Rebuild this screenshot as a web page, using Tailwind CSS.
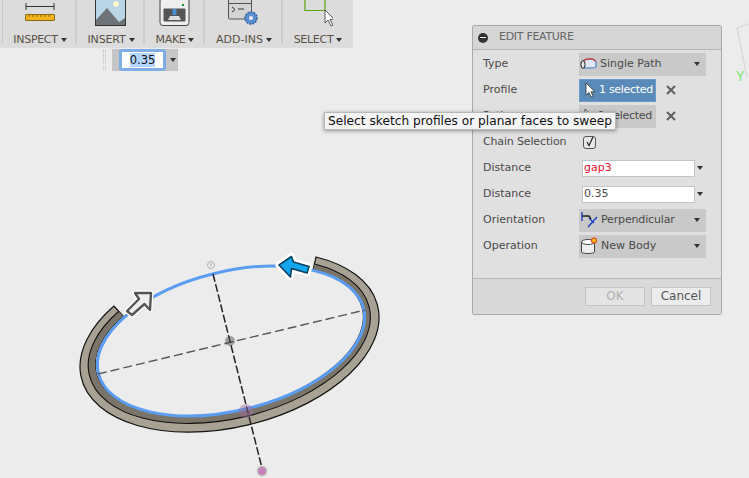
<!DOCTYPE html>
<html><head><meta charset="utf-8">
<script src="https://cdn.jsdelivr.net/npm/@tailwindcss/browser@4"></script>
</head>
<body class="bg-[#ececec]">
<div class="relative w-[749px] h-[478px] overflow-hidden bg-[#ececec] font-['DejaVu_Sans',sans-serif] text-[#4a4a4a]">

  <!-- viewport drawing -->
  <svg class="absolute left-0 top-0" width="749" height="478" viewBox="0 0 749 478" fill="none">
    <path d="M749 24L737 28L747 77" stroke="#cfd3cf" stroke-width="1"/>
    <path d="M114 306A152.500 85 -13.700 1 0 316 257L313 270A137 70 -13.700 1 1 123 316Z" fill="#a8a294" stroke="#111" stroke-width="1.200"/>
    <path d="M118.500 311.500A144 77 -13.700 1 0 314.500 264L313 270A137 70 -13.700 1 1 123 316Z" fill="#7a7568"/>
    <path d="M118.500 311.500A144 77 -13.700 1 0 314.500 264" stroke="#111" stroke-width="1.100"/>
    <ellipse cx="231" cy="341" rx="136.500" ry="69.500" transform="rotate(-13.700 231 341)" stroke="#5a9df2" stroke-width="3"/>
    <path d="M98 374L365 310" stroke="#555" stroke-width="1.400" stroke-dasharray="9 4"/>
    <path d="M213 274L262 468" stroke="#222" stroke-width="1.500" stroke-dasharray="8 2.500"/>
    <circle cx="211" cy="265" r="3.500" fill="#eee" stroke="#b0b0b0"/>
    <path d="M211 263V266" stroke="#999"/>
    <circle cx="230" cy="341" r="5" fill="#444" fill-opacity=".45"/>
    <circle cx="246" cy="411" r="7" fill="#a06aa0" fill-opacity=".45"/>
    <circle cx="262" cy="471" r="4.500" fill="#c77fbc" stroke="#bbb" stroke-width="1.500"/>
    <path d="M135 293L151 293L150 310L144.500 304L132 315L127 311L139 299Z" fill="#eee" stroke="#fff" stroke-width="5" stroke-linejoin="round"/>
    <path d="M135 293L151 293L150 310L144.500 304L132 315L127 311L139 299Z" fill="#eee" stroke="#555" stroke-width="2.400" stroke-linejoin="round"/>
    <path d="M279 265L291.500 256.500L293.500 262L309 266.500L307 273L291.500 268.500L290.500 277Z" fill="#fff" stroke="#fff" stroke-width="7" stroke-linejoin="round"/>
    <path d="M279 265L291.500 256.500L293.500 262L309 266.500L307 273L291.500 268.500L290.500 277Z" fill="#12a7ee" stroke="#0b3f60" stroke-width="1.600" stroke-linejoin="round"/>
  </svg>
  <div class="absolute left-[736px] top-[69px] text-[14px] leading-[14px] text-[#7fe87f]">Y</div>

  <!-- toolbar -->
  <div class="absolute left-0 top-0 flex h-[48px] w-[353px] bg-[#dcdcdc] text-[11px] text-[#5a5045]">
    <div class="flex w-[3px] flex-col"><div class="h-[43px] border-r border-[#c8c8c8]"></div></div>
    <div class="mb-[5px] flex w-[74px] flex-col items-center border-r-2 border-[#cbcbcb] pl-[2px]">
      <svg width="32" height="24" viewBox="0 0 32 24" class="shrink-0" fill="none">
        <path d="M2 6.500H30M2 3V10M30 3V10" stroke="#333" stroke-width="1"/>
        <rect x="1.500" y="14.500" width="29" height="6" rx=".5" fill="#f2b51d" stroke="#8a6a10"/>
        <path d="M5 15v2M9 15v2M13 15v2M17 15v2M21 15v2M25 15v2" stroke="#8a6a10"/>
      </svg>
      <div class="mt-[9px] flex items-center gap-[3px] leading-[14px] tracking-[-0.3px]">INSPECT<i class="border-x-[3px] border-t-[4px] border-x-transparent border-t-[#333]"></i></div>
    </div>
    <div class="mb-[5px] flex w-[68px] flex-col items-center border-r-2 border-[#cbcbcb] pl-[2px]">
      <svg width="32" height="26" viewBox="0 0 32 26" class="shrink-0" fill="none">
        <rect x=".500" y="-3" width="30" height="28.500" fill="#b9d5e6" stroke="#333"/>
        <path d="M1 25V20L12 8L24 22L30 18V25Z" fill="#6e7378"/>
        <circle cx="21" cy="4" r="2.800" fill="#fff7c8"/>
      </svg>
      <div class="mt-[7px] flex items-center gap-[3px] leading-[14px] tracking-[-0.15px]">INSERT<i class="border-x-[3px] border-t-[4px] border-x-transparent border-t-[#333]"></i></div>
    </div>
    <div class="mb-[5px] flex w-[60px] flex-col items-center border-r-2 border-[#cbcbcb] pl-[2px]">
      <svg width="32" height="26" viewBox="0 0 32 26" class="shrink-0" fill="none">
        <rect x="1" y="-2" width="29" height="27.500" rx="3" fill="#eee" stroke="#444"/>
        <rect x="4.500" y="8.500" width="22" height="13" rx="1" fill="#555"/>
        <path d="M9 20L11 16H20L22 20Z" fill="#ddd"/>
        <rect x="13.500" y="9" width="4" height="6" fill="#4a90d9"/>
        <rect x="23" y="4" width="2" height="2" fill="#1a8a2a"/>
      </svg>
      <div class="mt-[7px] flex items-center gap-[3px] leading-[14px] tracking-[-0.3px]">MAKE<i class="border-x-[3px] border-t-[4px] border-x-transparent border-t-[#333]"></i></div>
    </div>
    <div class="mb-[5px] flex w-[78px] flex-col items-center border-r-2 border-[#cbcbcb] pl-[2px]">
      <svg width="32" height="26" viewBox="0 0 32 26" class="shrink-0" fill="none">
        <rect x=".500" y="-3" width="23" height="22" rx="1" fill="#d4d4d4" stroke="#555"/>
        <path d="M1 3.500H23" stroke="#555"/>
        <path d="M4 7L7 9.500L4 12M10 9H16" stroke="#333"/>
        <circle cx="23" cy="18" r="6" fill="#5c8fd0" stroke="#2f5f9f" stroke-width="1.500" stroke-dasharray="2 1"/>
        <circle cx="23" cy="18" r="2" fill="#eee"/>
      </svg>
      <div class="mt-[7px] flex items-center gap-[3px] leading-[14px]">ADD-INS<i class="border-x-[3px] border-t-[4px] border-x-transparent border-t-[#333]"></i></div>
    </div>
    <div class="flex w-[69px] flex-col items-center pl-[1px]">
      <svg width="32" height="28" viewBox="0 0 32 28" class="shrink-0 -translate-x-[1px]" fill="none">
        <path d="M4 -1V10.500H24V-1" stroke="#5aa512" stroke-width="1.200"/>
        <path d="M24 10L24 23L27 20L30 26L32 25L29 19.500L33 19Z" fill="#fff" stroke="#333" stroke-width=".8"/>
      </svg>
      <div class="mt-[5px] flex items-center gap-[3px] leading-[14px] tracking-[-0.3px]">SELECT<i class="border-x-[3px] border-t-[4px] border-x-transparent border-t-[#333]"></i></div>
    </div>
  </div>

  <!-- value input -->
  <div class="absolute left-[103px] top-[49px] flex h-[22px] items-center">
    <div class="h-[20px] w-[3px] border-x border-dotted border-[#c4c4c4]"></div>
    <div class="ml-[6px] flex h-[22px] w-[66px] items-center bg-[#c6c6c6] pl-[7px]">
      <div class="flex h-[22px] w-[47px] items-center justify-center rounded-[3px] border-[3px] border-[#7eaee4] bg-white text-[11.500px] text-[#111]"><span class="bg-[#b4d5fe] leading-[14px]">0.35</span></div>
      <i class="ml-[4px] border-x-[3px] border-t-[4px] border-x-transparent border-t-[#333]"></i>
    </div>
  </div>

  <!-- panel -->
  <div class="absolute left-[472px] top-[25px] flex h-[290px] w-[250px] flex-col rounded-[2px] border border-[#a9a9a9] bg-[#e0e0e0] text-[11px]">
    <div class="flex h-[24px] shrink-0 items-center gap-[11px] border-b border-[#b4b4b4] bg-[#d6d6d6] pl-[5px] tracking-[-0.3px] text-[#666]">
      <span class="flex h-[10px] w-[10px] items-center justify-center rounded-full bg-[#333]"><i class="h-[1.500px] w-[6px] bg-white"></i></span>EDIT FEATURE
    </div>
    <div class="flex flex-1 flex-col pl-[10px] pt-[1px]">
      <div class="flex h-[26px] items-center"><span class="w-[96px]">Type</span>
        <div class="flex h-[23px] w-[127px] items-center bg-[#c9c9c9] pl-[1px] pr-[6px]">
          <svg width="17" height="12" viewBox="0 0 17 12" fill="none" class="mr-[3px] shrink-0"><path d="M3 3C7 0 14 0 16 4V9C16 10 12 10 4 10Z" fill="#dfe8f2" stroke="#4a80c0" stroke-width="1.200"/><path d="M3.500 2.800C7 0.500 14 0 15.500 3.500" stroke="#d43a2a" stroke-width="1.300"/><ellipse cx="3" cy="6.500" rx="2.100" ry="3.800" fill="#e4e4e4" stroke="#222"/></svg>
          <span class="whitespace-nowrap">Single Path</span><i class="ml-auto border-x-[3px] border-t-[4px] border-x-transparent border-t-[#333]"></i>
        </div>
      </div>
      <div class="flex h-[26px] items-center"><span class="w-[96px]">Profile</span>
        <div class="flex h-[23px] w-[77px] items-center gap-[3px] border border-[#6b9ccb] bg-[#5a8ab8] pl-[5px] text-white">
          <svg width="11" height="16" viewBox="0 0 11 16" class="shrink-0"><path d="M1 1V13L4 10.500L6 15L8 14L6 9.800H10Z" fill="#fff" stroke="#333" stroke-width=".8"/></svg>
          <span class="whitespace-nowrap tracking-[-0.3px]">1 selected</span>
        </div>
        <svg width="10" height="10" viewBox="0 0 10 10" class="ml-[10px]"><path d="M1 1L9 9M9 1L1 9" stroke="#5f5f5f" stroke-width="2"/></svg>
      </div>
      <div class="flex h-[26px] items-center"><span class="w-[96px]">Path</span>
        <div class="flex h-[23px] w-[77px] items-center gap-[3px] bg-[#c9c9c9] pl-[5px]">
          <svg width="11" height="16" viewBox="0 0 11 16" class="shrink-0"><path d="M1 1V13L4 10.500L6 15L8 14L6 9.800H10Z" fill="#eee" stroke="#333" stroke-width=".8"/></svg>
          <span class="whitespace-nowrap tracking-[-0.3px]">1 selected</span>
        </div>
        <svg width="10" height="10" viewBox="0 0 10 10" class="ml-[10px]"><path d="M1 1L9 9M9 1L1 9" stroke="#5f5f5f" stroke-width="2"/></svg>
      </div>
      <div class="flex h-[26px] items-center"><span class="w-[100px] whitespace-nowrap tracking-[-0.15px]">Chain Selection</span>
        <div class="flex h-[13px] w-[13px] items-center justify-center rounded-[3px] border border-[#555] bg-[#e8e8e8]">
          <svg width="10" height="10" viewBox="0 0 10 10" fill="none"><path d="M2 5L4 8.500L8 0" stroke="#222" stroke-width="1.200"/></svg>
        </div>
      </div>
      <div class="flex h-[26px] items-center"><span class="w-[99px]">Distance</span>
        <div class="flex h-[17px] w-[113px] items-center border border-[#c4c4c4] bg-white pl-[1px] text-[#e8102a]">gap3</div>
        <i class="ml-[2px] border-x-[3px] border-t-[4px] border-x-transparent border-t-[#333]"></i>
      </div>
      <div class="flex h-[26px] items-center"><span class="w-[99px]">Distance</span>
        <div class="flex h-[17px] w-[113px] items-center border border-[#c4c4c4] bg-white pl-[1px]">0.35</div>
        <i class="ml-[2px] border-x-[3px] border-t-[4px] border-x-transparent border-t-[#333]"></i>
      </div>
      <div class="flex h-[26px] items-center"><span class="w-[96px]">Orientation</span>
        <div class="flex h-[23px] w-[127px] items-center bg-[#c9c9c9] pl-[1px] pr-[6px]">
          <svg width="18" height="18" viewBox="0 0 18 18" fill="none" class="mr-[3px] shrink-0"><path d="M2 1V10M9 7L14 12M8 16L17 6" stroke="#1b3fc0" stroke-width="1.400"/><path d="M2 5H9L11 8" stroke="#222" stroke-width="1.400"/></svg>
          <span class="whitespace-nowrap tracking-[-0.15px]">Perpendicular</span><i class="ml-auto border-x-[3px] border-t-[4px] border-x-transparent border-t-[#333]"></i>
        </div>
      </div>
      <div class="flex h-[26px] items-center"><span class="w-[96px]">Operation</span>
        <div class="flex h-[23px] w-[127px] items-center bg-[#c9c9c9] pl-[1px] pr-[6px]">
          <svg width="18" height="18" viewBox="0 0 18 18" fill="none" class="mr-[3px] shrink-0"><path d="M1.500 5V15C1.500 17 14.500 17 14.500 15V5" fill="#eee" stroke="#444"/><ellipse cx="8" cy="5" rx="6.500" ry="2.500" fill="#fff" stroke="#444"/><circle cx="14" cy="3.500" r="2.700" fill="#f5b01a" stroke="#d8381a"/></svg>
          <span class="whitespace-nowrap">New Body</span><i class="ml-auto border-x-[3px] border-t-[4px] border-x-transparent border-t-[#333]"></i>
        </div>
      </div>
    </div>
    <div class="flex h-[36px] shrink-0 items-center justify-end gap-[6px] border-t border-[#b4b4b4] bg-[#d9d9d9] pr-[10px]">
      <button class="h-[19px] w-[60px] border border-[#c4c4c4] bg-[#e4e4e4] text-[12px] leading-[17px] text-[#b0b0b0]">OK</button>
      <button class="h-[19px] w-[60px] border border-[#c4c4c4] bg-[#ececec] text-[12px] leading-[17px] text-[#555]">Cancel</button>
    </div>
  </div>

  <!-- tooltip -->
  <div class="absolute left-[324px] top-[112px] flex h-[18px] w-[292px] items-center justify-center whitespace-nowrap border border-[#b8b8b8] bg-[#f4f4f4] text-[12.200px] text-[#111] shadow-[0_1px_4px_rgba(0,0,0,0.4)]">Select sketch profiles or planar faces to sweep</div>
</div>
</body></html>
